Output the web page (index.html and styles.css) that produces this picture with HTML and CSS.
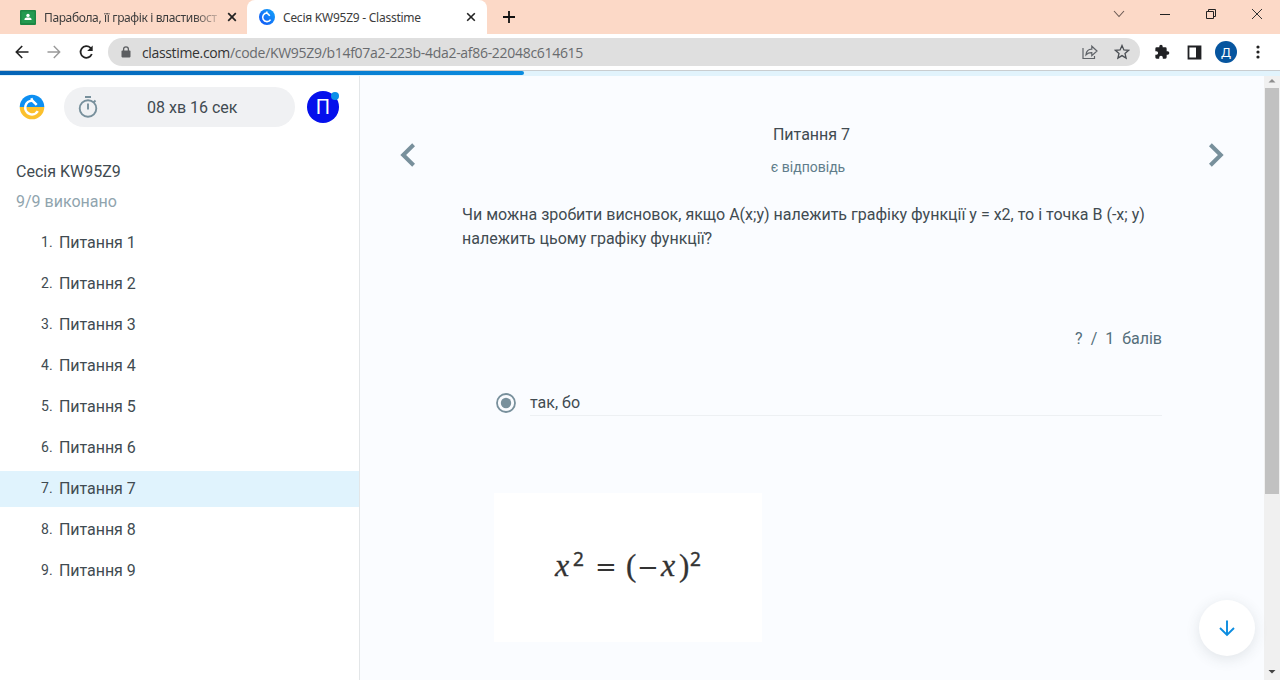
FILE: index.html
```html
<!DOCTYPE html>
<html lang="uk">
<head>
<meta charset="utf-8">
<title>Сесія KW95Z9 - Classtime</title>
<link rel="stylesheet" href="styles.css">
</head>
<body>
<div class="browser">
  <header class="tabs">
    <div class="tab tab-first">
      <svg class="favicon" width="16" height="15" viewBox="0 0 16 15"><rect width="16" height="15" rx="1" fill="#1c8744"/><rect x="1.5" y="1.5" width="13" height="11.5" fill="#229a50"/><circle cx="8" cy="5.4" r="1.7" fill="#fff"/><path d="M4.5 10V9.2C4.5 7.9 6.6 7.6 8 7.6s3.5.3 3.5 1.6v.8z" fill="#fff"/></svg>
      <span class="tab-title tab-title-faded">Парабола, її графік і властивост</span>
      <svg class="tab-close" width="10" height="10" viewBox="0 0 10 10"><path d="M1.2 1.2l7.6 7.6M8.8 1.2L1.2 8.8" stroke="#222" stroke-width="1.7"/></svg>
    </div>
    <div class="tab tab-active">
      <svg class="favicon" width="16" height="16" viewBox="0 0 16 16"><defs><linearGradient id="blue" x1="1" y1="0" x2="0" y2="1"><stop offset="0" stop-color="#12a5fa"/><stop offset="1" stop-color="#1252f5"/></linearGradient></defs><circle cx="8" cy="8" r="8" fill="url(#blue)"/><path d="M11.600 10.600A4.300 4.300 0 1 1 8 4l2.800 2.800M8 4.300L7.600 2.500" fill="none" stroke="#fff" stroke-width="1.600"/></svg>
      <span class="tab-title">Сесія KW95Z9 - Classtime</span>
      <svg class="tab-close" width="10" height="10" viewBox="0 0 10 10"><path d="M1.2 1.2l7.6 7.6M8.8 1.2L1.2 8.8" stroke="#222" stroke-width="1.6"/></svg>
    </div>
    <svg class="new-tab" width="12" height="12" viewBox="0 0 12 12"><path d="M6 0v12M0 6h12" stroke="#111" stroke-width="1.8"/></svg>
    <div class="window-buttons">
      <svg width="12" height="12" viewBox="0 0 12 12"><path d="M1 3l5 5.5L11 3" fill="none" stroke="#6b5a54" stroke-width="1.1"/></svg>
      <svg width="12" height="12" viewBox="0 0 12 12"><path d="M1 6.5h10" stroke="#222" stroke-width="1"/></svg>
      <svg width="12" height="12" viewBox="0 0 12 12"><path d="M1.5 3.5h7v7h-7zM3.5 3.5v-2h7v7h-2" fill="none" stroke="#222"/></svg>
      <svg width="12" height="12" viewBox="0 0 12 12"><path d="M1 1l10 10M11 1L1 11" stroke="#333" stroke-width="1"/></svg>
    </div>
  </header>
  <div class="toolbar">
    <div class="nav">
      <svg width="14" height="14" viewBox="0 0 14 14"><path d="M13.5 7H1.5M7.2 1L1.3 7l5.9 6" fill="none" stroke="#222" stroke-width="1.6"/></svg>
      <svg width="14" height="14" viewBox="0 0 14 14"><path d="M.5 7h12M6.8 1l5.9 6-5.9 6" fill="none" stroke="#999" stroke-width="1.4"/></svg>
      <svg width="16" height="16" viewBox="0 0 16 16"><path d="M12.800 10A5.800 5.800 0 1 1 11.500 3.900L12.500 5" fill="none" stroke="#222" stroke-width="1.8"/><path d="M13.700 1.500v5.500H8.200z" fill="#222"/></svg>
    </div>
    <div class="address">
      <svg width="10" height="12" viewBox="0 0 10 12"><path d="M2.6 5V3.3a2.4 2.4 0 0 1 4.8 0V5" fill="none" stroke="#5c5e61" stroke-width="1.3"/><rect x=".5" y="4.6" width="9" height="6.8" rx=".8" fill="#5c5e61"/></svg>
      <span class="url"><span class="host">classtime.com</span>/code/KW95Z9/b14f07a2-223b-4da2-af86-22048c614615</span>
      <svg width="16" height="16" viewBox="0 0 16 16"><path d="M1 4v10.500h11.500V12M4 10.800C4.300 7 6.500 5.300 9.800 5.200V2.200L15 7l-5.200 4.600V8.600C7.300 8.500 5.600 9 4 10.800z" fill="none" stroke="#5f6368" stroke-width="1.2"/></svg>
      <svg class="star" width="16" height="16" viewBox="0 0 16 16"><path d="M8 1.500l1.900 4.400 4.700.4-3.600 3.100 1.100 4.700L8 11.600l-4.100 2.500L5 9.400 1.400 6.300l4.700-.4z" fill="none" stroke="#4b4f54" stroke-width="1.3"/></svg>
    </div>
    <div class="extensions">
      <svg width="16" height="16" viewBox="0 0 24 24"><path fill="#202124" d="M20.500 11H19V7a2 2 0 0 0-2-2h-4V3.500a2.500 2.500 0 0 0-5 0V5H4a2 2 0 0 0-2 2v3.800h1.500a2.700 2.700 0 0 1 0 5.400H2V20a2 2 0 0 0 2 2h3.800v-1.500a2.700 2.700 0 0 1 5.400 0V22H17a2 2 0 0 0 2-2v-4h1.500a2.500 2.500 0 0 0 0-5z"/></svg>
      <svg width="15" height="15" viewBox="0 0 15 15"><path d="M1.500 1.500h12v12h-12z" fill="#fff" stroke="#202124" stroke-width="1.8"/><path d="M9 1h5v13H9z" fill="#202124"/></svg>
      <span class="profile">Д</span>
      <svg width="4" height="14" viewBox="0 0 4 14"><g fill="#222"><circle cx="2" cy="2" r="1.600"/><circle cx="2" cy="7" r="1.600"/><circle cx="2" cy="12" r="1.600"/></g></svg>
    </div>
  </div>
  <div class="progress"><div class="progress-fill"></div></div>
  <div class="page">
    <aside class="sidebar">
      <div class="session-bar">
        <svg width="26" height="26" viewBox="0 0 26 26"><path d="M.7 13a12.300 12.300 0 0 1 24.600 0z" fill="#0d8ff2"/><path d="M.7 13a12.300 12.300 0 0 0 24.600 0z" fill="#fbc02d"/><path d="M18.800 17.200A6.800 6.800 0 1 1 13.500 6.800l4.200 4M13.500 7.300L12.300 4.300" fill="none" stroke="#fff" stroke-width="2.500"/></svg>
        <div class="timer">
          <svg width="20" height="24" viewBox="0 0 20 24"><g fill="none" stroke="#78909c" stroke-width="1.9"><circle cx="10" cy="13.500" r="8.300"/><path d="M7 2h6M10 8.500v6M15.500 7.500l2-2"/></g></svg>
          <span class="time">08 хв 16 сек</span>
        </div>
        <div class="avatar">П<span class="status-dot"></span></div>
      </div>
      <h1 class="session-name">Сесія KW95Z9</h1>
      <p class="done">9/9 виконано</p>
      <nav class="questions">
        <a class="question"><span class="num">1.</span>Питання 1</a>
        <a class="question"><span class="num">2.</span>Питання 2</a>
        <a class="question"><span class="num">3.</span>Питання 3</a>
        <a class="question"><span class="num">4.</span>Питання 4</a>
        <a class="question"><span class="num">5.</span>Питання 5</a>
        <a class="question"><span class="num">6.</span>Питання 6</a>
        <a class="question question-current"><span class="num">7.</span>Питання 7</a>
        <a class="question"><span class="num">8.</span>Питання 8</a>
        <a class="question"><span class="num">9.</span>Питання 9</a>
      </nav>
    </aside>
    <main class="main">
      <div class="question-head">
        <svg width="16" height="24" viewBox="0 0 16 24"><path d="M13.600 1.800L3.200 12l10.400 10.200" fill="none" stroke="#78909c" stroke-width="4"/></svg>
        <div class="question-title">
          <h2 class="title">Питання 7</h2>
          <p class="answered">є відповідь</p>
        </div>
        <svg width="16" height="24" viewBox="0 0 16 24"><path d="M2.400 1.800L12.800 12 2.400 22.200" fill="none" stroke="#78909c" stroke-width="4"/></svg>
      </div>
      <div class="content">
        <p class="text">Чи можна зробити висновок, якщо А(х;у) належить графіку функції у = х2, то і точка В (-х; у) <br>належить цьому графіку функції?</p>
        <p class="points">? / 1 балів</p>
        <div class="answer">
          <svg width="20" height="20" viewBox="0 0 20 20"><circle cx="10" cy="10" r="9" fill="none" stroke="#78909c" stroke-width="1.8"/><circle cx="10" cy="10" r="5.200" fill="#78909c"/></svg>
          <span class="answer-text">так, бо</span>
        </div>
        <div class="formula">
          <span class="var">x</span><span class="sup">2</span><span class="eq">=</span><span class="paren">(</span><span class="minus">−</span><span class="var">x</span><span class="paren">)</span><span class="sup">2</span>
        </div>
      </div>
      <button class="scroll-down"><svg width="18" height="18" viewBox="0 0 18 18"><path d="M9 1.500v14M2 9l7 7 7-7" fill="none" stroke="#0b8ce0" stroke-width="1.9"/></svg></button>
    </main>
    <div class="scrollbar">
      <svg width="16" height="12" viewBox="0 0 16 12"><path d="M4.500 6.500L8 3l3.500 3.500z" fill="#8d8d8d"/></svg>
      <div class="thumb"></div>
      <svg class="scroll-end" width="16" height="16" viewBox="0 0 16 16"><path d="M4.500 6h7L8 9.500z" fill="#444"/></svg>
    </div>
  </div>
</div>
</body>
</html>
```
FILE: styles.css
```css
* { box-sizing: border-box; }
body { margin: 0; background: #fff; font-family: Roboto, "Liberation Sans", sans-serif; font-size: 16px; color: #414b51; }
h1, h2, p { margin: 0; font-weight: 400; }
svg { display: block; flex: none; }
.browser { display: flex; flex-direction: column; width: 1280px; height: 680px; overflow: hidden; }

.tabs { display: flex; align-items: center; height: 34px; flex: none; background: #fcd9c7; font: 12px "Noto Sans", sans-serif; color: #3c3c3c; }
.tab { display: flex; align-items: center; height: 34px; }
.tab-first { width: 247px; padding-left: 20px; }
.tab-active { width: 240px; padding-left: 12px; background: #fff; border-radius: 8px 8px 0 0; }
.tab-title { margin-left: 8px; white-space: nowrap; width: 173px; letter-spacing: -0.25px; }
.tab-title-faded { width: 175px; letter-spacing: -0.38px; -webkit-mask-image: linear-gradient(to right, #000 85%, rgba(0, 0, 0, 0.2)); mask-image: linear-gradient(to right, #000 85%, rgba(0, 0, 0, 0.2)); }
.tab-close { margin-left: 8px; }
.tab-active .tab-close { margin-left: 10px; }
.new-tab { margin-left: 16px; }
.window-buttons { display: flex; gap: 34px; margin: -6px 17px 0 auto; }

.toolbar { display: flex; align-items: center; height: 36px; flex: none; }
.nav { display: flex; align-items: center; gap: 18px; width: 108px; padding-left: 15px; }
.address { display: flex; align-items: center; width: 1032px; height: 28px; padding: 0 10px 0 13px; border-radius: 14px; background: #dfdfdf; }
.url { flex: 1; margin-left: 11px; font: 14px "Open Sans", sans-serif; letter-spacing: -0.38px; color: #696b6e; white-space: nowrap; }
.host { color: #333; letter-spacing: -0.35px; }
.url { letter-spacing: -0.3px; }
.star { margin-left: 16px; }
.extensions { display: flex; align-items: center; margin-left: 14px; }
.extensions svg:nth-child(2) { margin-left: 17px; }
.profile { width: 22px; height: 22px; margin: 0 19px 0 13px; border-radius: 50%; background: #06559f; color: #fff; font: 13px/22px "Noto Sans", sans-serif; text-align: center; }

.progress { height: 6px; flex: none; border-top: 1px solid #c9cdd0; background: #e1f3fc; }
.progress-fill { width: 524px; height: 4px; background: linear-gradient(to right, #0463b5, #0a8ce0); border-radius: 0 2px 2px 0; }

.page { display: flex; flex: 1; min-height: 0; }
.sidebar { width: 360px; border-right: 1px solid #e3e6e8; }
.session-bar { display: flex; align-items: center; height: 40px; margin: 11px 0 0 19px; }
.timer { display: flex; align-items: center; width: 231px; height: 40px; margin-left: 19px; padding: 0 14px; border-radius: 20px; background: #f0f1f3; }
.time { margin-left: 49px; white-space: nowrap; }
.avatar { position: relative; width: 32px; height: 32px; margin-left: 12px; border-radius: 50%; background: #0510ec; color: #fff; font-size: 20px; line-height: 32px; text-align: center; }
.status-dot { position: absolute; top: 1px; right: 0; width: 8px; height: 8px; border-radius: 50%; background: #0a8fe8; }
.session-name { margin: 33px 0 0 16px; font-size: 16px; line-height: 24px; }
.done { margin: 6px 0 0 16px; line-height: 24px; color: #90a4ae; }
.questions { display: flex; flex-direction: column; gap: 5px; margin-top: 11px; }
.question { display: flex; align-items: center; height: 36px; padding: 0 0 2px 41px; letter-spacing: -0.05px; }
.question-current { background: #e0f3fd; }
.num { width: 18px; font-size: 14px; letter-spacing: 0.2px; }

.main { position: relative; width: 904px; background: #fafcff; }
.question-head { display: flex; align-items: center; justify-content: space-between; height: 60px; margin: 49px 40px 0 40px; }
.question-title { text-align: center; padding: 0 8px 8px 0; }
.title { font-size: 16px; line-height: 24px; padding-left: 7px; }
.answered { margin-top: 8px; font-size: 14px; line-height: 24px; color: #607d8b; }
.content { margin: 18px 102px 0 102px; }
.text { line-height: 24px; white-space: nowrap; }
.points { margin-top: 76px; line-height: 24px; text-align: right; color: #546e7a; word-spacing: 4px; }
.answer { display: flex; align-items: center; height: 26px; margin: 39px 0 0 34px; }
.answer-text { display: block; flex: 1; height: 26px; margin-left: 14px; line-height: 26px; border-bottom: 1px solid #edf0f3; }
.formula { display: flex; align-items: baseline; width: 268px; height: 149px; margin: 77px 0 0 32px; padding: 50px 0 0 61px; background: #fff; color: #333; font: 28px/44px "DejaVu Serif", serif; white-space: nowrap; }
.var { font-family: "Liberation Serif", serif; font-style: italic; font-size: 32px; width: 18px; -webkit-text-stroke: 0.3px #333; }
.sup { font-size: 19px; width: 12px; transform: translateY(-10px); font-family: "Noto Sans", sans-serif; -webkit-text-stroke: 0.4px #333; }
.eq { width: 31px; margin-left: 10px; font-size: 26px; }
.paren { width: 11px; font: 31px/44px "Liberation Serif", serif; -webkit-text-stroke: 0.3px #333; }
.minus { width: 24px; font-size: 26px; }

.scroll-down { position: absolute; right: 9px; bottom: 24px; display: flex; align-items: center; justify-content: center; width: 56px; height: 56px; padding: 0; border: 0; border-radius: 50%; background: #fff; box-shadow: 0 3px 14px rgba(55, 71, 79, 0.13); }

.scrollbar { display: flex; flex-direction: column; align-items: center; width: 16px; background: #f0f0f0; }
.thumb { width: 14px; height: 406px; background: #c1c1c1; }
.scroll-end { margin-top: auto; }
```
